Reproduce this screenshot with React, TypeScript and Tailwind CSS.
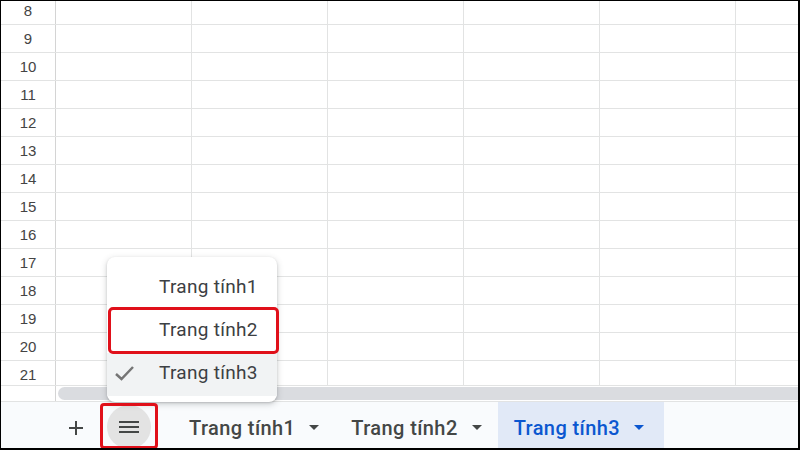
import React from "react";

const rows = [8, 9, 10, 11, 12, 13, 14, 15, 16, 17, 18, 19, 20, 21];
const cols = [0, 1, 2, 3, 4, 5];

function Caret({ color }: { color: string }) {
  return (
    <svg width="10" height="5" viewBox="0 0 10 5" className="flex-none">
      <path d="M0 0 L10 0 L5 5 Z" fill={color} />
    </svg>
  );
}

export default function App() {
  return (
    <div className="relative flex h-[450px] w-[800px] flex-col overflow-hidden border-t border-l border-r-2 border-b-2 border-black bg-white font-['Roboto',sans-serif]">
      {/* grid */}
      <div className="h-[384px] flex-none overflow-hidden">
        <div className="-mt-[4px] flex flex-col">
          {rows.map((r) => (
            <div key={r} className="flex h-[28px] flex-none border-b border-[#e2e3e3]">
              <div className="flex w-[55px] flex-none items-center justify-center border-r border-[#d4d4d4] pt-[1px] font-['Liberation_Sans',sans-serif] text-[15px] text-[#444]">
                {r}
              </div>
              {cols.map((c) => (
                <div key={c} className="w-[136px] flex-none border-r border-[#e2e3e3]" />
              ))}
            </div>
          ))}
        </div>
      </div>

      {/* horizontal scrollbar */}
      <div className="flex h-[17px] flex-none border-t border-b border-[#e2e3e3] bg-white">
        <div className="w-[55px] flex-none border-r border-[#d4d4d4]" />
        <div className="ml-[2px] mt-[1px] h-[13px] flex-1 -mr-[20px] rounded-full bg-[#dadce0]" />
      </div>

      {/* tab bar */}
      <div className="flex flex-1 items-stretch bg-[#f9fbfd] pl-[57px]">
        <div className="flex w-[36px] flex-none items-center justify-center pt-[4px]">
          <svg width="14" height="14" viewBox="0 0 14 14">
            <path d="M7 0 V14 M0 7 H14" stroke="#444746" strokeWidth="2" />
          </svg>
        </div>
        <div className="ml-[13px] flex flex-none items-start pt-[3px]">
          <div className="flex h-[44px] w-[44px] items-center justify-center rounded-full bg-[#e3e3e3]">
            <svg width="20" height="12" viewBox="0 0 20 12">
              <path d="M0 1 H20 M0 6 H20 M0 11 H20" stroke="#444746" strokeWidth="2" />
            </svg>
          </div>
        </div>
        <div className="ml-[22px] flex flex-none items-center gap-[14px] pl-[16px] pr-[16px] pt-[4px] text-[20px] font-medium tracking-[0.4px] text-[#444746]">
          <span>Trang tính1</span>
          <Caret color="#444746" />
        </div>
        <div className="flex flex-none items-center gap-[14px] pl-[16px] pr-[16px] pt-[4px] text-[20px] font-medium tracking-[0.4px] text-[#444746]">
          <span>Trang tính2</span>
          <Caret color="#444746" />
        </div>
        <div className="flex flex-none items-center gap-[14px] bg-[#e1e9f7] pl-[16px] pr-[20px] pt-[4px] text-[20px] font-medium tracking-[0.4px] text-[#0b57d0]">
          <span>Trang tính3</span>
          <Caret color="#0b57d0" />
        </div>
      </div>

      {/* popup menu */}
      <div className="absolute left-[106px] top-[256px] w-[170px] rounded-[8px] bg-white pt-[10px] pb-[6px] shadow-[0_2px_6px_rgba(60,64,67,0.25),0_1px_2px_rgba(60,64,67,0.2)]">
        <div className="flex h-[43px] items-center pb-[3px] pl-[52px] text-[19px] tracking-[0.3px] text-[#3c4043]">Trang tính1</div>
        <div className="flex h-[43px] items-center pb-[3px] pl-[52px] text-[19px] tracking-[0.3px] text-[#3c4043]">Trang tính2</div>
        <div className="relative flex h-[43px] items-center bg-[#f1f3f4] pb-[3px] pl-[52px] text-[19px] tracking-[0.3px] text-[#3c4043]">
          <svg className="absolute left-[8px] top-[13px]" width="19" height="15" viewBox="0 0 19 15">
            <path d="M1 8 L6.5 13 L18 1" stroke="#757575" strokeWidth="2.5" fill="none" />
          </svg>
          Trang tính3
        </div>
      </div>

      {/* red highlight boxes */}
      <div className="absolute left-[107px] top-[306px] h-[47px] w-[171px] rounded-[5px] border-[3px] border-[#e0101a]" />
      <div className="absolute left-[99px] top-[402px] h-[46px] w-[58px] rounded-[4px] border-[3px] border-[#e0101a]" />
    </div>
  );
}
